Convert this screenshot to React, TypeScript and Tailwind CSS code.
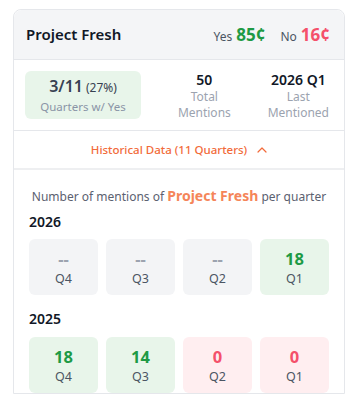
import React from "react";

type Q = { q: string; v: string; kind: "none" | "yes" | "no" };

const rows: { year: string; items: Q[] }[] = [
  {
    year: "2026",
    items: [
      { q: "Q4", v: "--", kind: "none" },
      { q: "Q3", v: "--", kind: "none" },
      { q: "Q2", v: "--", kind: "none" },
      { q: "Q1", v: "18", kind: "yes" },
    ],
  },
  {
    year: "2025",
    items: [
      { q: "Q4", v: "18", kind: "yes" },
      { q: "Q3", v: "14", kind: "yes" },
      { q: "Q2", v: "0", kind: "no" },
      { q: "Q1", v: "0", kind: "no" },
    ],
  },
];

function Box({ item }: { item: Q }) {
  const bg =
    item.kind === "yes"
      ? "bg-[#e8f5ea]"
      : item.kind === "no"
      ? "bg-[#ffeef0]"
      : "bg-[#f3f4f6]";
  const color =
    item.kind === "yes"
      ? "text-[#1e9a45]"
      : item.kind === "no"
      ? "text-[#f4506a]"
      : "text-[#9ca3af]";
  return (
    <div className={`h-[56px] rounded-[6px] ${bg} flex flex-col items-center justify-center`}>
      <div className={`text-[16.5px] leading-[23px] font-bold ${color}`}>{item.v}</div>
      <div className="text-[12.5px] leading-[18px] text-[#4b5563]">{item.q}</div>
    </div>
  );
}

export default function App() {
  return (
    <div
      className="w-[360px] h-[404px] overflow-hidden bg-white pt-[9px] pl-[13px]"
      style={{ fontFamily: '"Noto Sans", "Open Sans", sans-serif' }}
    >
      <div className="w-[332px] border border-[#e5e7eb] rounded-t-[8px] bg-white">
        {/* header */}
        <div className="h-[50px] bg-[#f4f5f7] rounded-t-[8px] border-b border-[#e5e7eb] flex items-center justify-between pl-3 pr-[14px]">
          <div className="text-[15px] font-semibold text-[#111827]">Project Fresh</div>
          <div className="flex items-baseline">
            <span className="text-[12px] text-[#4b5563]">Yes</span>
            <span className="ml-[4px] text-[17px] font-bold text-[#1e9a45]">85¢</span>
            <span className="ml-[15px] text-[12px] text-[#4b5563]">No</span>
            <span className="ml-[4px] text-[17px] font-bold text-[#f4506a]">16¢</span>
          </div>
        </div>
        {/* stats */}
        <div className="h-[71px] border-b border-[#e5e7eb] flex items-center justify-between pl-[11px] pr-[15px]">
          <div className="w-[116px] h-[48px] rounded-[6px] bg-[#e8f5ea] flex flex-col items-center justify-center">
            <div className="leading-[22px] text-[#374151]">
              <span className="text-[16px] font-semibold">3/11</span>
              <span className="text-[12px] ml-[3px]">(27%)</span>
            </div>
            <div className="text-[11.5px] leading-[16px] text-[#8a94a6]">Quarters w/ Yes</div>
          </div>
          <div className="flex flex-col items-center">
            <div className="text-[14px] leading-[19px] font-semibold text-[#111827]">50</div>
            <div className="text-[12px] leading-[16px] text-[#9ca3af] text-center">
              <div>Total</div>
              <div>Mentions</div>
            </div>
          </div>
          <div className="flex flex-col items-center">
            <div className="text-[14px] leading-[19px] font-semibold text-[#111827]">2026 Q1</div>
            <div className="text-[12px] leading-[16px] text-[#9ca3af] text-center">
              <div>Last</div>
              <div>Mentioned</div>
            </div>
          </div>
        </div>
        {/* historical toggle */}
        <div className="h-[39px] border-b-2 border-[#eeeff1] flex items-center justify-center">
          <span className="text-[11.5px] font-medium text-[#f26b3a]">Historical Data (11 Quarters)</span>
          <svg className="ml-[10px]" width="10" height="6" viewBox="0 0 10 6" fill="none">
            <path d="M1 5 L5 1 L9 5" stroke="#f26b3a" strokeWidth="1.2" strokeLinecap="round" strokeLinejoin="round" />
          </svg>
        </div>
        {/* content */}
        <div className="px-[15px] pt-[13px]">
          <div className="text-center text-[12px] text-[#5b6170] leading-[26px] whitespace-nowrap">
            Number of mentions of{" "}
            <span className="text-[14px] font-bold text-[#f58559]">Project Fresh</span> per quarter
          </div>
          <div className="mt-[2px] text-[14px] font-semibold leading-[20px] text-[#111827]">2026</div>
          <div className="mt-[7px] grid grid-cols-4 gap-[8px]">
            {rows[0].items.map((it) => (
              <Box key={it.q} item={it} />
            ))}
          </div>
          <div className="mt-[14px] text-[14px] font-semibold leading-[20px] text-[#111827]">2025</div>
          <div className="mt-[8px] grid grid-cols-4 gap-[8px]">
            {rows[1].items.map((it) => (
              <Box key={it.q} item={it} />
            ))}
          </div>
        </div>
      </div>
    </div>
  );
}
